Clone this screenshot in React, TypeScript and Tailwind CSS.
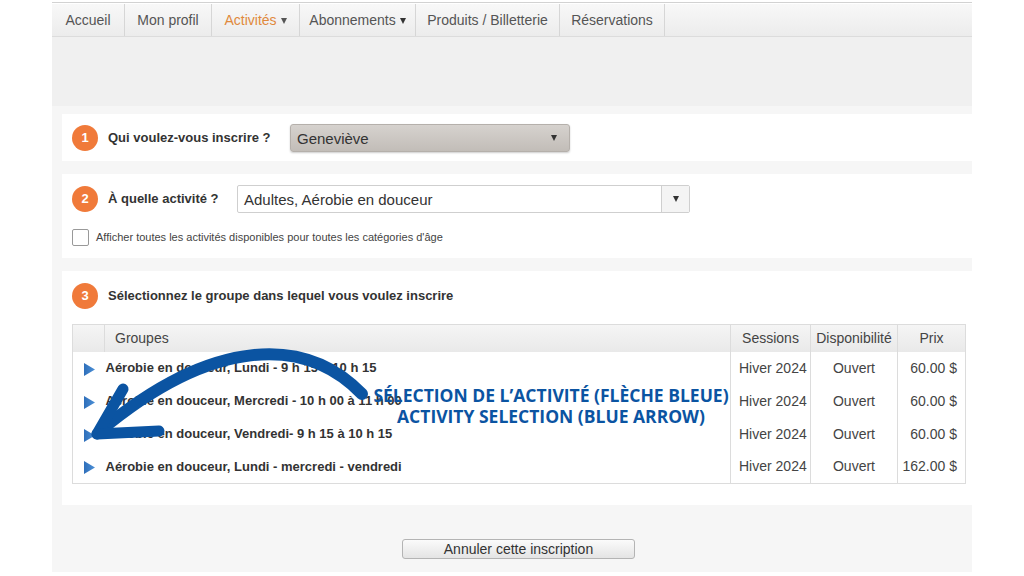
import React from 'react';

const tabs = [
  { label: 'Accueil', w: 'w-[73px]' },
  { label: 'Mon profil', w: 'w-[87px]' },
  { label: 'Activités', w: 'w-[88px]', active: true, caret: true },
  { label: 'Abonnements', w: 'w-[116px]', caret: true },
  { label: 'Produits / Billetterie', w: 'w-[144px]' },
  { label: 'Réservations', w: 'w-[105px]' },
];

const rows = [
  { name: 'Aérobie en douceur, Lundi - 9 h 15 à 10 h 15', price: '60.00 $' },
  { name: 'Aérobie en douceur, Mercredi - 10 h 00 à 11 h 00', price: '60.00 $' },
  { name: 'Aérobie en douceur, Vendredi- 9 h 15 à 10 h 15', price: '60.00 $' },
  { name: 'Aérobie en douceur, Lundi - mercredi - vendredi', price: '162.00 $' },
];

function Step({ n }: { n: number }) {
  return (
    <div className="flex h-[26px] w-[26px] shrink-0 items-center justify-center rounded-full bg-[#f07a3a] text-[13px] font-bold text-white">
      {n}
    </div>
  );
}

function Caret({ className = '' }: { className?: string }) {
  return <span className={'inline-block h-0 w-0 border-x-[3.5px] border-t-[6px] border-x-transparent border-t-[#333] ' + className} />;
}

function PlayIcon() {
  return (
    <svg width="13" height="15" viewBox="0 0 13 15">
      <defs>
        <linearGradient id="pg" x1="0" y1="0" x2="1" y2="0">
          <stop offset="0" stopColor="#2f6fba" />
          <stop offset="1" stopColor="#4b8fd6" />
        </linearGradient>
      </defs>
      <path d="M1 1 L12 7.5 L1 14 Z" fill="url(#pg)" />
    </svg>
  );
}

export default function App() {
  return (
    <div className="relative h-[576px] w-[1024px] overflow-hidden bg-white font-['Liberation_Sans',Arial,sans-serif] text-[#333]">
      <div className="ml-[52px] w-[920px]">
        {/* top rule */}
        <div className="mt-[2px] h-[2px] border-t border-[#d2d2d2]" />

        {/* tab bar */}
        <div className="flex h-[33px] border-b border-[#dcdcdc] bg-gradient-to-b from-[#f8f8f8] to-[#ececec]">
          {tabs.map((t) => (
            <div
              key={t.label}
              className={`${t.w} flex items-center justify-center gap-[4px] border-r border-[#d6d6d6] text-[14px] ${
                t.active ? 'text-[#e0893c]' : 'text-[#555]'
              }`}
            >
              {t.label}
              {t.caret && <Caret className={t.active ? '!border-t-[#555] mt-[1px]' : 'mt-[1px]'} />}
            </div>
          ))}
        </div>

        {/* header spacer */}
        <div className="h-[69px] bg-[#f0f0f0]" />

        <div className="bg-[#f6f6f6] pb-[1px] pl-[10px] pt-[8px]">
          {/* step 1 */}
          <div className="flex h-[47px] items-center bg-white pl-[10px]">
            <Step n={1} />
            <span className="ml-[10px] w-[182px] text-[13px] font-bold">Qui voulez-vous inscrire ?</span>
            <div className="flex h-[28px] w-[280px] items-center justify-between rounded-[3px] border border-[#b5b0ab] bg-gradient-to-b from-[#d6d2ce] to-[#c2bdb8] pl-[6px] pr-[12px] pt-[3px] text-[15px] text-[#333] shadow-[0_1px_2px_rgba(0,0,0,0.2)]">
              Geneviève
              <Caret className="-mt-[3px]" />
            </div>
          </div>

          <div className="h-[13px]" />

          {/* step 2 */}
          <div className="h-[84px] bg-white pl-[10px] pt-[11px]">
            <div className="flex items-center">
              <Step n={2} />
              <span className="ml-[10px] w-[129px] text-[13px] font-bold">À quelle activité ?</span>
              <div className="flex h-[28px] w-[453px] items-center rounded-[2px] border border-[#cfcfcf] bg-white text-[15px] text-[#333]">
                <span className="flex-1 pl-[6px] pt-[2px]">Adultes, Aérobie en douceur</span>
                <div className="flex h-full w-[28px] items-center justify-center border-l border-[#cfcfcf] bg-[#f4f4f4]">
                  <Caret />
                </div>
              </div>
            </div>
            <div className="mt-[16px] flex items-center">
              <div className="h-[17px] w-[17px] rounded-[2px] border border-[#999] bg-white" />
              <span className="ml-[7px] text-[11px] text-[#444]">
                Afficher toutes les activités disponibles pour toutes les catégories d'âge
              </span>
            </div>
          </div>

          <div className="h-[13px]" />

          {/* step 3 */}
          <div className="h-[234px] bg-white pl-[10px] pr-[6px] pt-[12px]">
            <div className="flex items-center">
              <Step n={3} />
              <span className="ml-[10px] text-[13px] font-bold">Sélectionnez le groupe dans lequel vous voulez inscrire</span>
            </div>

            <table className="mt-[15px] w-[894px] border-collapse border border-[#dcdcdc] text-[14px]">
              <thead>
                <tr className="h-[27px] bg-gradient-to-b from-[#f5f5f5] to-[#e9e9e9] text-[#444]">
                  <th className="w-[32px] border-r border-[#dcdcdc] p-0" />
                  <th className="border-r border-[#dcdcdc] pl-[10px] text-left font-normal">Groupes</th>
                  <th className="w-[80px] border-r border-[#dcdcdc] font-normal">Sessions</th>
                  <th className="w-[87px] border-r border-[#dcdcdc] font-normal">Disponibilité</th>
                  <th className="w-[68px] font-normal">Prix</th>
                </tr>
              </thead>
              <tbody>
                {rows.map((r) => (
                  <tr key={r.name} className="h-[33px]">
                    <td className="p-0 pl-[10px] pt-[2px] align-middle">
                      <PlayIcon />
                    </td>
                    <td className="border-r border-[#dcdcdc] pl-[1px] text-[13px] font-bold text-[#333]">{r.name}</td>
                    <td className="border-r border-[#dcdcdc] pl-[8px] text-[#444]">Hiver 2024</td>
                    <td className="border-r border-[#dcdcdc] text-center text-[#444]">Ouvert</td>
                    <td className="pr-[8px] text-right text-[#444]">{r.price}</td>
                  </tr>
                ))}
              </tbody>
            </table>
          </div>
        </div>

        {/* footer */}
        <div className="flex h-[66px] items-start justify-center bg-[#f6f6f6] pt-[33px]">
          <button className="ml-[13px] h-[20px] w-[233px] rounded-[3px] border border-[#b4b4b4] bg-gradient-to-b from-[#fbfbfb] to-[#e4e4e4] text-[14px] leading-[18px] text-[#333]">
            Annuler cette inscription
          </button>
        </div>
      </div>

      {/* annotation overlay */}
      <svg className="pointer-events-none absolute left-0 top-0" width="1024" height="576" viewBox="0 0 1024 576">
        <g fill="none" stroke="#0b54a2" strokeLinecap="round" strokeLinejoin="round">
          <path d="M362 394 C 306 336, 214 336, 100 431" strokeWidth="12" />
          <path d="M97 434 L123 389" strokeWidth="11" />
          <path d="M97 434 L159 431" strokeWidth="11" />
        </g>
      </svg>
      <div className="pointer-events-none absolute left-[351px] top-[385px] w-[400px] text-center font-['Open_Sans',sans-serif] text-[17.5px] font-bold leading-[21px] text-[#0b54a2]">
        <div>SÉLECTION DE L’ACTIVITÉ (FLÈCHE BLEUE)</div>
        <div>ACTIVITY SELECTION (BLUE ARROW)</div>
      </div>
    </div>
  );
}
